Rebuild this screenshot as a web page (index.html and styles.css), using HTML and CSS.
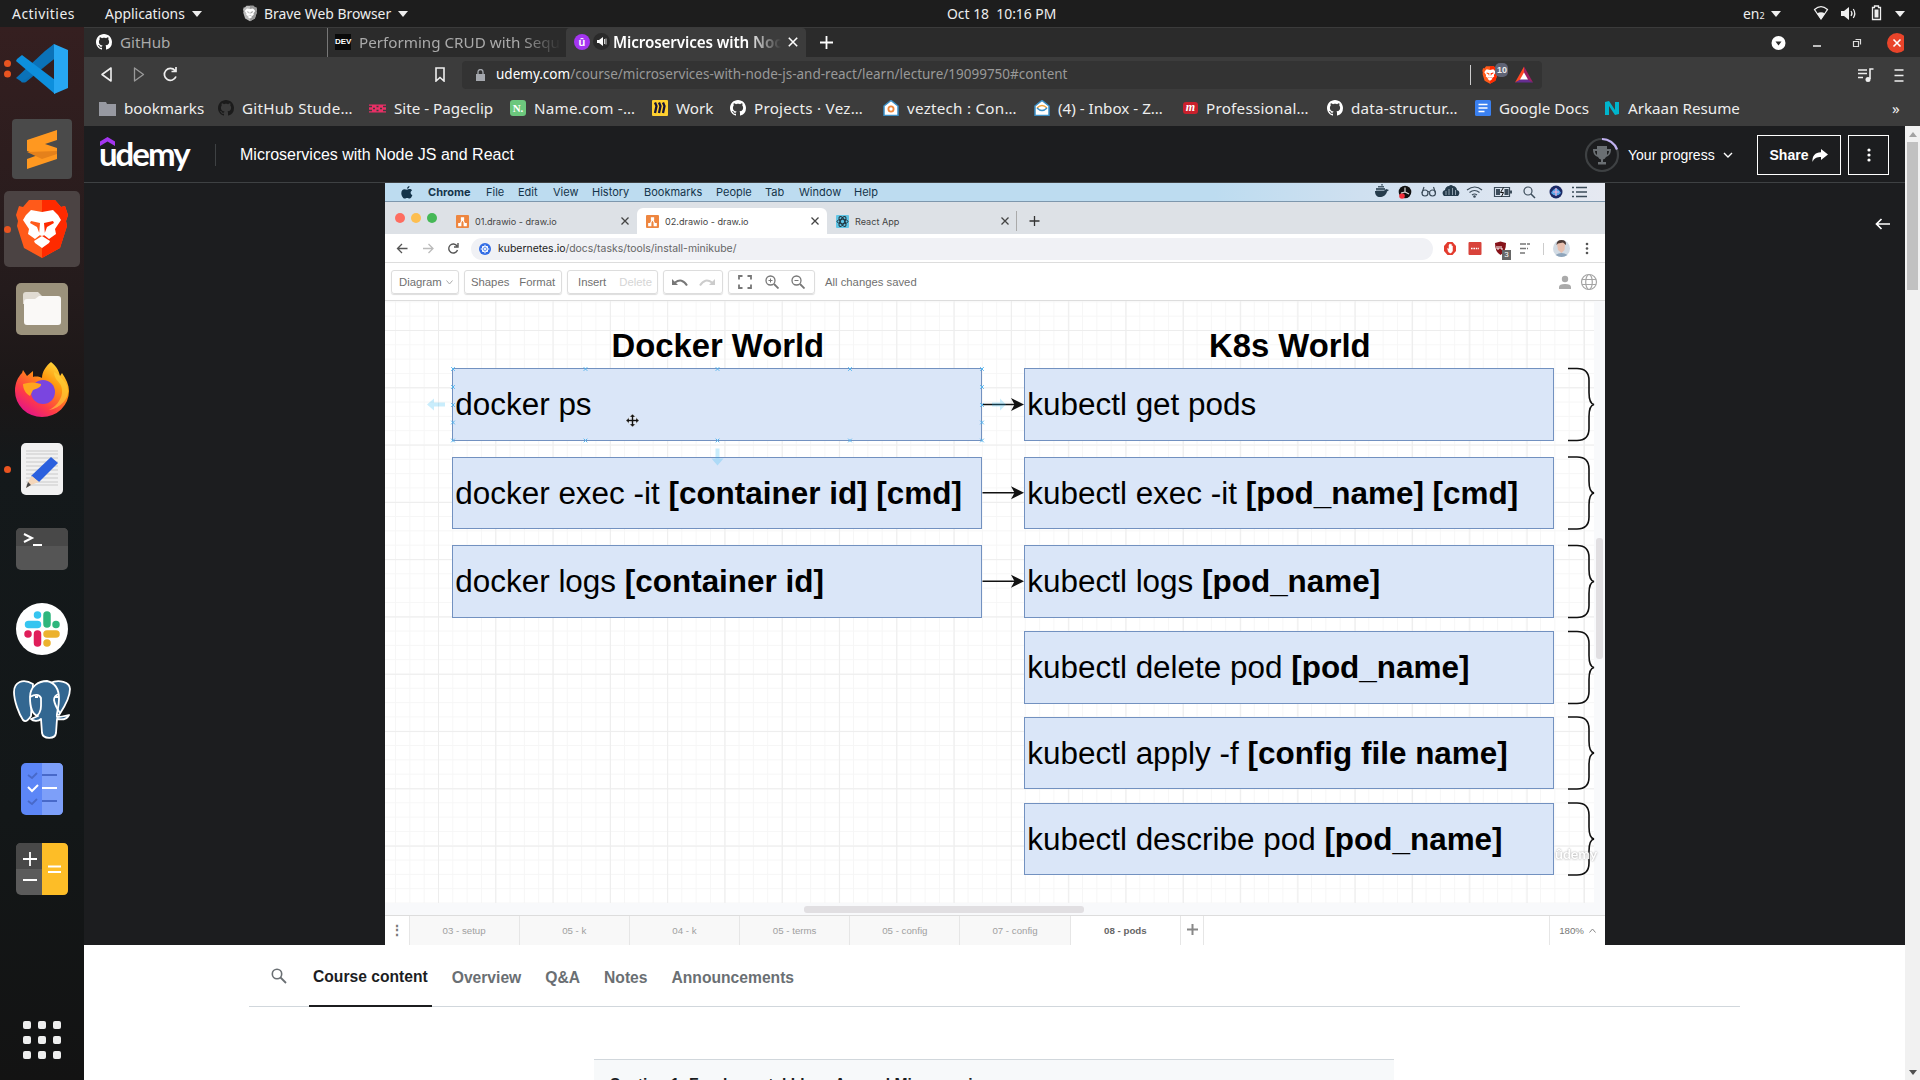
FILE: index.html
```html
<!DOCTYPE html>
<html lang="en">
<head>
<meta charset="utf-8">
<title>Microservices with Node JS and React</title>
<link rel="stylesheet" href="styles.css">
</head>
<body>
<svg class="defs" width="0" height="0">
  <defs>
    <symbol id="github" viewBox="0 0 16 16"><path fill="currentColor" d="M8 0C3.58 0 0 3.58 0 8c0 3.54 2.29 6.53 5.47 7.59.4.07.55-.17.55-.38 0-.19-.01-.82-.01-1.49-2.01.37-2.53-.49-2.69-.94-.09-.23-.48-.94-.82-1.13-.28-.15-.68-.52-.01-.53.63-.01 1.08.58 1.23.82.72 1.21 1.87.87 2.33.66.07-.52.28-.87.51-1.07-1.78-.2-3.64-.89-3.64-3.95 0-.87.31-1.59.82-2.15-.08-.2-.36-1.02.08-2.12 0 0 .67-.21 2.2.82.64-.18 1.32-.27 2-.27.68 0 1.36.09 2 .27 1.53-1.04 2.2-.82 2.2-.82.44 1.1.16 1.92.08 2.12.51.56.82 1.27.82 2.15 0 3.07-1.87 3.75-3.65 3.95.29.25.54.73.54 1.48 0 1.07-.01 1.93-.01 2.2 0 .21.15.46.55.38A8.01 8.01 0 0 0 16 8c0-4.42-3.58-8-8-8z"/></symbol>
    <symbol id="lion" viewBox="0 0 52 60"><path d="M13 1h26l6 7 4-1 3 9-2 6 1 5-7 22-18 10L8 49 1 27l1-5-2-6 3-9 4 1z" fill="var(--shield)"/><path d="M26 1h13l6 7 4-1 3 9-2 6 1 5-7 22-18 10z" fill="var(--shield2)"/><path d="M15 11l11 2 11-2 5 5 3 5-6 9 1 5-7 5-5-4 3-8 7-4-1-2-9 2 1 12-3 1-3-1 1-12-9-2-1 2 7 4 3 8-5 4-7-5 1-5-6-9 3-5zM26 37l8 5-1 2-7 5-7-5-1-2z" fill="#fff"/></symbol>
    <symbol id="drawio" viewBox="0 0 12 12"><rect width="12" height="12" rx="1" fill="#ee8640"/><path d="M6 4L3.5 9M6 4l2.5 5" stroke="#fff" stroke-width="1"/><path d="M4.5 2h3v3h-3zM2 7.3h3v3H2zM7 7.3h3v3H7z" fill="#fff"/></symbol>
    <symbol id="cross" viewBox="0 0 10 10"><path d="M1.5 1.5l7 7m0-7l-7 7" stroke="currentColor" stroke-width="1.3"/></symbol>
    <symbol id="mail" viewBox="0 0 16 16"><path d="M1 6l7-5.500 7 5.500v9.500H1z" fill="#fff" stroke="#3b8fc6" stroke-width="1.500"/></symbol>
    <symbol id="ndoc" viewBox="0 0 16 16"><path d="M1 15V2l4-1 6 9V2h4v12l-4 1-6-9v9z" fill="#00b5cc"/></symbol>
  </defs>
</svg>

<header class="topbar">
  <span class="act">Activities</span>
  <span class="menu"><b>Applications</b><i class="caret"></i></span>
  <span class="menu"><svg class="mono" width="14" height="19"><use href="#lion"/></svg><b>Brave Web Browser</b><i class="caret"></i></span>
  <span class="clock">Oct 18 &nbsp;10:16 PM</span>
  <span class="lang">en<small>2</small><i class="caret"></i></span>
  <svg class="tray" width="100" height="27" viewBox="0 0 100 27"><path d="M6.500 9.500c4-3.500 9-3.500 13 0L13 19z" fill="none" stroke="#eee" stroke-width="1.200"/><path d="M9 13.500c2.500-1.700 5.500-1.700 8 0L13 19.500z" fill="#eee"/><path d="M33 11h3l5-4v13l-5-4h-3z" fill="#eee"/><path d="M43 11q2 2.500 0 5M45.300 9q3 4.500 0 9" stroke="#eee" stroke-width="1.200" fill="none"/><path d="M64.500 7.500h2v-1.500h4v1.500h2v12h-8z" fill="none" stroke="#eee" stroke-width="1.300"/><path d="M66.500 9.500h4v8h-4z" fill="#eee"/><path d="M87 11h10l-5 6z" fill="#eee"/></svg>
</header>

<div class="desktop">
<aside class="dock">
  <div class="app two"><svg width="52" height="52" viewBox="0 0 52 52"><path d="M5 39L38 1v15L10 39q-2 1-5 0z" fill="#0a6fb3"/><path d="M0 35l29-27 9-7v15L6 39z" fill="#0b72b8"/><path d="M1 16l5-4L39 37v14L0 18z" fill="#0d8fdc"/><path d="M38 1l14 6v38l-14 6z" fill="#27a7f2"/></svg></div>
  <div class="app"><svg width="60" height="60" viewBox="0 0 60 60"><rect width="60" height="60" rx="4" fill="#4a4a4a"/><path d="M15 21l30-10v10l-12 4 12 4v11L15 50V40l11-4-11-4z" fill="#ff9820"/><path d="M15 33l30-1v3l-15 5z" fill="#e5811b"/></svg></div>
  <div class="app on current"><svg class="orange" width="52" height="60"><use href="#lion"/></svg></div>
  <div class="app"><svg width="52" height="52" viewBox="0 0 52 52"><rect width="52" height="52" rx="5" fill="#9b927c"/><path d="M7 12q0-3 3-3h12l4 4h15v8H7z" fill="#e0dbd2"/><path d="M8 19q0-3 3-3h8l4-3h19q3 0 3 3v23q0 3-3 3H11q-3 0-3-3z" fill="#faf9f7"/></svg></div>
  <div class="app"><svg width="54" height="55" viewBox="0 0 54 55"><defs><linearGradient id="fx" x1="1" y1="0" x2=".3" y2="1"><stop offset="0" stop-color="#fff44f"/><stop offset=".4" stop-color="#ff980e"/><stop offset=".75" stop-color="#ff3b47"/><stop offset="1" stop-color="#e31587"/></linearGradient></defs><path d="M36 0c6 5 8 9 9 14l2-3c4 6 7 12 7 18a27 26 0 0 1-54 0c0-8 3-14 7-18l1-3 4 6 6-5v6c3-1 8 0 9 1 0-6 4-12 9-16z" fill="url(#fx)"/><circle cx="28" cy="30" r="12" fill="#7a45e0"/><path d="M8 22q9-3 18 0c1 3-5 5-8 6l-3 6c-4-2-7-7-7-12z" fill="#ffa51e"/><path d="M39 10c0 10 9 9 8 21-1 8-7 14-13 17 12-2 20-12 19-20-1-8-6-10-8-14z" fill="#ffd53c" opacity=".6"/></svg></div>
  <div class="app on"><svg width="42" height="52" viewBox="0 0 42 52"><rect width="42" height="52" rx="5" fill="#f1f1f1"/><path d="M5 8h32M5 11h32M5 15h32M5 19h32M5 23h32M5 27h32M5 31h32M5 35h32M5 39h32M5 42h32" stroke="#c9c9c9" stroke-width="1"/><path d="M30 14l7 6-19 19-8-6z" fill="#2b60de"/><path d="M11 33l7 6-8 3-5 3 3-8z" fill="#f4d7bb"/><path d="M7 39l3 3-5 3z" fill="#444"/></svg></div>
  <div class="app"><svg width="52" height="42" viewBox="0 0 52 42"><rect width="52" height="42" rx="5" fill="#555"/><path d="M0 18V5q0-5 5-5h42q5 0 5 5v13z" fill="#484848"/><path d="M8 6l8 4-8 4M17 17h9" fill="none" stroke="#fff" stroke-width="2"/></svg></div>
  <div class="app"><svg width="52" height="52" viewBox="0 0 52 52"><circle cx="26" cy="26" r="26" fill="#fff"/><g stroke-width="7.500" stroke-linecap="round"><path d="M12.500 21.500h9M21.500 12v0" stroke="#36c5f0"/><path d="M31 12v9M40 21.500v0" stroke="#2eb67d"/><path d="M31 31h9M31 40v0" stroke="#ecb22e"/><path d="M21.500 31v9M12 31v0" stroke="#e01e5a"/></g></svg></div>
  <div class="app"><svg width="58" height="60" viewBox="0 0 58 60"><g fill="#336791" stroke="#fff" stroke-width="1.800" stroke-linejoin="round"><path d="M37 4c9-4 20-1 20 6 0 10-7 20-11 26l-6-3zM20 5C10-1 1 3 1 13c0 9 5 22 9 28 3 3 6-1 8-4z"/><path d="M17 18C17 7 26 2 34 2c9 2 12 10 12 18 0 9-3 15-2 18 4 0 8-1 12-2-2 4-7 5-12 4l-1 14c-1 7-13 6-14 0l-1-14c-3 3-8 2-10 0l7-3c-7-2-8-10-8-19z"/><path d="M17 18c5-3 9-3 11 1 0 8 1 13-4 18M46 15c-4 1-5 3-5 6 1 6 4 10 6 13" fill="none"/></g><path d="M22 18h3M42 18h3" stroke="#fff" stroke-width="2"/></svg></div>
  <div class="app"><svg width="42" height="52" viewBox="0 0 42 52"><rect width="42" height="52" rx="5" fill="#5c86f7"/><path d="M21 0h16q5 0 5 5v42q0 5-5 5H21z" fill="#7d9ff9"/><path d="M7 12l4 3 5-5M21 12h15M7 38l4 3 5-5M21 38h15" stroke="#4869c9" stroke-width="1.800" fill="none"/><path d="M7 24l4 4 6-6M21 25h15" stroke="#fff" stroke-width="2" fill="none"/></svg></div>
  <div class="app"><svg width="52" height="52" viewBox="0 0 52 52"><rect width="52" height="52" rx="5" fill="#5b5b5b"/><path d="M0 26V5q0-5 5-5h21v26z" fill="#484848"/><path d="M26 0h21q5 0 5 5v42q0 5-5 5H26z" fill="#fdbd27"/><path d="M7 16h14M14 9v14M7 37h14M32 23.500h13M32 29h13" stroke="#fff" stroke-width="1.800"/></svg></div>
  <div class="grid9"><i></i><i></i><i></i><i></i><i></i><i></i><i></i><i></i><i></i></div>
</aside>

<main class="browser">
  <div class="tabstrip">
    <div class="tab t1"><svg width="16" height="16"><use href="#github"/></svg><span>GitHub</span></div>
    <div class="tab t2"><em class="dev">DEV</em><span class="fade">Performing CRUD with Sequ</span></div>
    <div class="tab t3"><em class="ud">û</em><svg width="17" height="17" viewBox="0 0 17 17"><circle cx="8.500" cy="8.500" r="8.500" fill="#2a2a2a"/><path d="M4 7h2l4-3v9l-4-3H4z" fill="#fff"/><path d="M11.500 6v5M13 5.500v6" stroke="#fff" stroke-width=".8"/></svg><span class="fade">Microservices with Noc</span><svg class="x" width="12" height="12"><use href="#cross"/></svg></div>
    <svg class="plus" width="13" height="13" viewBox="0 0 13 13"><path d="M6.500 0v13M0 6.500h13" stroke="#fff" stroke-width="1.800"/></svg>
    <svg class="winbtns" width="134" height="28" viewBox="0 0 134 28"><circle cx="8.500" cy="14" r="7" fill="#fff"/><path d="M5.500 12.500h6l-3 4z" fill="#2b2b2b"/><path d="M43 17h8" stroke="#fff" stroke-width="1.400"/><path d="M83.500 12.500h5v5h-5zM85.500 10.500h5v5" fill="none" stroke="#ddd" stroke-width="1.200"/><circle cx="127" cy="14" r="10" fill="#e9442a"/><path d="M123.500 10.500l7 7m0-7l-7 7" stroke="#fff" stroke-width="1.600"/></svg>
  </div>

  <div class="navbar">
    <svg class="history" width="100" height="28" viewBox="0 0 100 28"><path d="M16 8v13L7 14.500z" fill="none" stroke="#eee" stroke-width="1.600" stroke-linejoin="round"/><path d="M39.500 8v13l9-6.500z" fill="none" stroke="#999" stroke-width="1.300" stroke-linejoin="round"/><path d="M80 10.500a6 6 0 1 0 1 6M81 7v4.500h-4.500" fill="none" stroke="#eee" stroke-width="1.700"/></svg>
    <svg class="mark" width="12" height="15" viewBox="0 0 12 15"><path d="M2 1h8v13l-4-3.500L2 14z" fill="none" stroke="#eee" stroke-width="1.600"/></svg>
    <div class="omni">
      <svg width="9" height="12" viewBox="0 0 9 12"><path d="M0 5h9v7H0z" fill="#a5a8ae"/><path d="M2 5V3a2.500 2.500 0 0 1 5 0v2" fill="none" stroke="#a5a8ae" stroke-width="1.300"/></svg>
      <span class="url"><b>udemy.com</b>/course/microservices-with-node-js-and-react/learn/lecture/19099750#content</span>
      <svg class="shields" width="45" height="24" viewBox="0 0 45 24"><path d="M.5 2v20" stroke="#ccc"/><svg class="orange" x="12" y="3" width="16" height="18" viewBox="0 0 52 60"><use href="#lion"/></svg><rect x="25" y="0" width="13" height="14" rx="5" fill="#5f6375"/></svg>
      <svg class="bat" width="18" height="17" viewBox="0 0 18 16"><path d="M9 0L0 16l9-4z" fill="#ff4724"/><path d="M9 0l9 16-9-4z" fill="#9e1f63"/><path d="M0 16h18l-9-5z" fill="#662d91"/><path d="M9 6l4 7H5z" fill="#fff"/></svg>
      <small class="count">10</small>
    </div>
    <svg class="tools" width="60" height="28" viewBox="0 0 60 28"><path d="M4 9h9M4 12.500h9M4 16.500h5" stroke="#eee" stroke-width="1.700"/><path d="M19.500 8h-3.500v10" stroke="#eee" stroke-width="1.600" fill="none"/><circle cx="14" cy="18.500" r="2.500" fill="#eee"/><path d="M40.500 9h9M40.500 14.500h9M40.500 20h9" stroke="#eee" stroke-width="1.700"/></svg>
  </div>

  <div class="bookmarks">
    <a><svg width="17" height="15" viewBox="0 0 17 15"><path d="M0 1h7l1 2h9v12H0z" fill="#9799a1"/></svg><span>bookmarks</span></a>
    <a><svg class="dark" width="16" height="16"><use href="#github"/></svg><span class="wide">GitHub Stude…</span></a>
    <a><svg width="17" height="9" viewBox="0 0 17 9"><rect y=".5" width="17" height="8" fill="#e92f66"/><path d="M0 2.500h3M0 6.500h3M14 2.500h3M14 6.500h3M4 4.500h2M11 4.500h2M7.500 2.500h2M7.500 6.500h2" stroke="#3c3c3c" stroke-width="1.300"/></svg><span>Site - Pageclip</span></a>
    <a><em class="nm">N.</em><span class="wide">Name.com -…</span></a>
    <a><svg width="16" height="16" viewBox="0 0 16 16"><rect width="16" height="16" rx="1" fill="#ffd02f"/><path d="M3 2.500L4.500 6 3 13M7 2.500L8.500 6 7 13M11 2.500L12.500 6 11 13" stroke="#15123a" stroke-width="2.300" fill="none"/></svg><span>Work</span></a>
    <a><svg width="16" height="16"><use href="#github"/></svg><span class="wide">Projects · Vez…</span></a>
    <a><svg width="16" height="16" viewBox="0 0 16 16"><use href="#mail"/><circle cx="8" cy="9" r="2.600" fill="none" stroke="#f0883c" stroke-width="1.800"/></svg><span class="wide">veztech : Con…</span></a>
    <a><svg width="16" height="16" viewBox="0 0 16 16"><use href="#mail"/><path d="M3 8q5-5 10 0" fill="none" stroke="#f0a33c" stroke-width="1.500"/><path d="M3 8q5 5 10 0" fill="none" stroke="#3b8fc6" stroke-width="1.500"/></svg><span>(4) - Inbox - Z…</span></a>
    <a><em class="mm">m</em><span class="wide">Professional…</span></a>
    <a><svg width="16" height="16"><use href="#github"/></svg><span class="wide">data-structur…</span></a>
    <a><svg width="16" height="16" viewBox="0 0 16 16"><rect width="16" height="16" rx="1.500" fill="#3a80f0"/><path d="M3.500 4.500h9M3.500 8h9M3.500 11.500h6" stroke="#fff" stroke-width="1.600"/></svg><span>Google Docs</span></a>
    <a><svg width="16" height="16"><use href="#ndoc"/></svg><span>Arkaan Resume</span></a>
    <a class="more">»</a>
  </div>

  <div class="page">
  <div class="content">
    <div class="course">
      <div class="logo"><svg width="15" height="9" viewBox="0 0 15 9"><path d="M7.500 0L15 4.500v4.500L7.500 4.500 0 9V4.500z" fill="#a435f0"/></svg>udemy</div>
      <div class="title">Microservices with Node JS and React</div>
      <svg class="ring" width="36" height="36" viewBox="0 0 36 36"><circle cx="18" cy="18" r="16" fill="none" stroke="#3e4143" stroke-width="2.200"/><path d="M18 2a16 16 0 0 1 15 10.500" fill="none" stroke="#c0b0f0" stroke-width="2.200"/><path d="M13 9h10v3h4c0 5-2 7-5 8q-1 2-3 2.500V25h3v2.500h-8V25h3v-2.500q-2-.5-3-2.500c-3-1-5-3-5-8h4zm-2 5c0 2 1 3 2 4v-4zm12 0v4c1-1 2-2 2-4z" fill="#6a6f73"/></svg>
      <span class="yp">Your progress</span>
      <svg class="chev" width="10" height="7" viewBox="0 0 10 7"><path d="M1 1l4 4 4-4" fill="none" stroke="#fff" stroke-width="1.400"/></svg>
      <div class="btn share">Share<svg width="16" height="13" viewBox="0 0 16 13"><path d="M9 0l7 5.500L9 11V8C5 8 2 9 .5 13 0 7 3 3.500 9 3.300z" fill="#fff"/></svg></div>
      <div class="btn dots"><svg width="4" height="14" viewBox="0 0 4 14"><circle cx="2" cy="2" r="1.600" fill="#fff"/><circle cx="2" cy="7" r="1.600" fill="#fff"/><circle cx="2" cy="12" r="1.600" fill="#fff"/></svg></div>
    </div>

    <div class="stage">
      <div class="video">
        <div class="macbar">
          <svg width="12" height="13" viewBox="0 0 12 13"><path d="M8.500 0c0 1.500-1 2.700-2.500 2.800C6 1.300 7 .3 8.500 0zM6 3.700c1 0 1.300-.6 2.600-.6 1 0 2 .5 2.400 1.300-2 1-1.700 3.800.4 4.700-.6 1.700-1.600 3.500-2.900 3.500-1 0-1.200-.5-2.300-.5s-1.500.5-2.300.5C2 12.600.3 9.600.3 7.200c0-2.500 1.500-4 3.200-4 1 0 1.800.5 2.500.5z" fill="#14344a"/></svg>
          <b>Chrome</b><span>File</span><span>Edit</span><span>View</span><span>History</span><span>Bookmarks</span><span>People</span><span>Tab</span><span>Window</span><span>Help</span>
          <svg class="macicons" width="214" height="18" viewBox="0 0 214 18"><g fill="#263c4c"><path d="M0 8h9l2-2 3 1-2 1.500c-1 4-4 5.500-7 5.500S0 12 0 8z"/><path d="M1 5h9v2.500H1zM3 3h6v1.500H3zM6 1.300h2v1.300H6z" opacity=".8"/><path d="M69 13c-2-2-2-5 1-6 0-2 2-4 4-4 1-1.500 3-1.500 4 0 2 0 4 2 4 4 3 1 3 4 1 6z"/><path d="M71 12V8M74 12V6M77.500 12V5M80.500 12V7" stroke="#d7e3ee" stroke-width=".6"/></g><circle cx="30" cy="9" r="6.300" fill="#111"/><circle cx="27" cy="13" r="2.800" fill="#f2303b"/><path d="M30 9V4.500M30 9l4 2M30 9l-4 1" stroke="#ddd" stroke-width="1.200"/><g fill="none" stroke="#3c4c5a" stroke-width="1.200"><circle cx="50" cy="10" r="3"/><circle cx="57.500" cy="10" r="3"/><path d="M47 10l2-6M60.500 10l-2-6M53 9q.7-1 1.500 0M92 7q8-6 15 0M94.500 9.500q5-4 10 0M97 12q2.500-2 5 0"/><path d="M119.500 4.500h15v9h-15z"/><circle cx="153" cy="8" r="4"/><path d="M156 11l4 4M197 4.500h2M201 4.500h11M197 9h2M201 9h11M197 13.500h2M201 13.500h11" stroke-width="1.500"/></g><circle cx="99.500" cy="13.500" r="1.300" fill="#3c4c5a"/><path d="M121 6h4v6h-4zM129.500 6h4v6h-4zM135 7.500h2v3h-2z" fill="#3c4c5a"/><path d="M128.500 4.500l-3 5h3l-2 4" stroke="#111" fill="none"/><circle cx="181" cy="9" r="6.500" fill="#1c2a66"/><path d="M176 10q5-9 10 0-5 5-10 0z" fill="#55a5e8"/><path d="M181 5v8M178 9h6" stroke="#f0b0d8" stroke-width="1.200"/></svg>
        </div>
        <div class="ctabs">
          <div class="lights"><i></i><i></i><i></i></div>
          <div class="ctab"><svg width="13" height="13"><use href="#drawio"/></svg><span>01.drawio - draw.io</span><svg class="x" width="10" height="10"><use href="#cross"/></svg></div>
          <div class="ctab active"><svg width="13" height="13"><use href="#drawio"/></svg><span>02.drawio - draw.io</span><svg class="x" width="10" height="10"><use href="#cross"/></svg></div>
          <div class="ctab"><svg width="13" height="13" viewBox="0 0 13 13"><rect width="13" height="13" rx="1" fill="#61c5e5"/><g fill="none" stroke="#20323c" stroke-width="1"><ellipse cx="6.500" cy="6.500" rx="5.500" ry="2.200"/><ellipse cx="6.500" cy="6.500" rx="5.500" ry="2.200" transform="rotate(60 6.500 6.500)"/><ellipse cx="6.500" cy="6.500" rx="5.500" ry="2.200" transform="rotate(120 6.500 6.500)"/></g></svg><span>React App</span><svg class="x" width="10" height="10"><use href="#cross"/></svg></div>
          <svg class="newtab" width="24" height="20" viewBox="0 0 24 20"><path d="M.5 0v20" stroke="#aaa"/><path d="M18.500 5v10M13.500 10h10" stroke="#333" stroke-width="1.300"/></svg>
        </div>
        <div class="cnav">
          <svg width="80" height="28" viewBox="0 0 80 28"><path d="M22.500 14.500H12.500M17 10l-4.500 4.500L17 19" fill="none" stroke="#555" stroke-width="1.300"/><path d="M38 14.500h10M43.500 10l4.500 4.500-4.500 4.500" fill="none" stroke="#bbb" stroke-width="1.300"/><path d="M72 12a4.500 4.500 0 1 0 .5 4M73 9v4h-4" fill="none" stroke="#555" stroke-width="1.400"/></svg>
          <div class="comni"><svg width="12" height="12" viewBox="0 0 12 12"><circle cx="6" cy="6" r="6" fill="#326ce5"/><circle cx="6" cy="6" r="3" fill="none" stroke="#fff"/><path d="M6 1.500v9M1.500 6h9M3 3l6 6M9 3L3 9" stroke="#fff" stroke-width=".7"/></svg><span><b>kubernetes.io</b>/docs/tasks/tools/install-minikube/</span></div>
          <svg class="exts" width="164" height="28" viewBox="0 0 164 28"><path d="M7.500 8h5l3.500 4v5l-3.500 4h-5L4 17v-5z" fill="#e33b2e"/><path d="M7.500 14.500l1 3.500 1.500 1h1l1.500-2v-5h-1v-1.500h-1V10h-1v1H9v4z" fill="#fff" stroke="#fff" stroke-width=".5"/><rect x="28.500" y="8" width="13" height="13" rx="1" fill="#d8433b"/><path d="M31 14.500h8" stroke="#fff" stroke-width="1.600" stroke-dasharray="1.600 .8"/><path d="M55 9l5.500-1.500L66 9q0 9-5.500 12Q55 18 55 9z" fill="#861219"/><path d="M57 12v3h2v-3M61 12v3h2" stroke="#fff" fill="none"/><path d="M80 10h10M80 14.500h8M80 19h5" stroke="#777" stroke-width="1.500" stroke-dasharray="6 1"/><path d="M103.500 9v12" stroke="#ccc"/><circle cx="121.500" cy="14.500" r="8.500" fill="#d2dbe4"/><path d="M117 10q4-6 8 0l-.5 6-3 3-3.500-3z" fill="#e8bfae"/><path d="M116.500 11q0-5 5-5t4.500 5l-3-2.500-5 1z" fill="#4d3a35"/><path d="M115.500 21q6-4 12 0-6 4-12 0z" fill="#8fa5bb"/><g fill="#555"><circle cx="147" cy="10" r="1.300"/><circle cx="147" cy="14.500" r="1.300"/><circle cx="147" cy="19" r="1.300"/></g></svg>
          <small class="cnt">3</small>
        </div>
        <div class="dbar">
          <div class="grp g1"><span>Diagram</span><svg width="7" height="5" viewBox="0 0 7 5"><path d="M.5.5l3 3.500 3-3.500" fill="none" stroke="#aaa"/></svg></div>
          <div class="grp g2"><span>Shapes</span><span>Format</span></div>
          <div class="grp g3"><span>Insert</span><span class="off">Delete</span></div>
          <div class="grp g4"><svg width="17" height="10" viewBox="0 0 17 10"><path d="M1 2v6h6z" fill="#777"/><path d="M4 5.500Q11 .5 16 8.500" fill="none" stroke="#777" stroke-width="2"/></svg><svg width="17" height="10" viewBox="0 0 17 10"><path d="M16 2v6h-6z" fill="#ccc"/><path d="M13 5.500Q6 .5 1 8.500" fill="none" stroke="#ccc" stroke-width="2"/></svg></div>
          <div class="grp g5"><svg width="14" height="14" viewBox="0 0 14 14"><path d="M1 4.500V1h3.500M9.500 1H13v3.500M13 9.500V13H9.500M4.500 13H1V9.500" fill="none" stroke="#777" stroke-width="1.800"/></svg><svg width="14" height="14" viewBox="0 0 14 14"><circle cx="5.500" cy="5.500" r="4.500" fill="none" stroke="#777" stroke-width="1.300"/><path d="M9 9l4.500 4.500" stroke="#777" stroke-width="1.800"/><path d="M3.500 5.500h4M5.500 3.500v4" stroke="#777"/></svg><svg width="14" height="14" viewBox="0 0 14 14"><circle cx="5.500" cy="5.500" r="4.500" fill="none" stroke="#777" stroke-width="1.300"/><path d="M9 9l4.500 4.500" stroke="#777" stroke-width="1.800"/><path d="M3.500 5.500h4" stroke="#777"/></svg></div>
          <span class="saved">All changes saved</span>
          <svg class="who" width="42" height="20" viewBox="0 0 42 20"><circle cx="8" cy="7" r="3.200" fill="#aaa"/><path d="M2 17v-2q0-3 6-3t6 3v2z" fill="#aaa"/><g fill="none" stroke="#a5a5a5" stroke-width="1.200"><circle cx="32" cy="10" r="7.500"/><ellipse cx="32" cy="10" rx="3.300" ry="7.500"/><path d="M25 7.500h14M25 12.500h14"/></g></svg>
        </div>
        <div class="canvas">
          <div class="paper"></div>
          <h2 class="h1">Docker World</h2><h2 class="h2">K8s World</h2>
          <div class="node l r1">docker ps</div>
          <div class="node l r2"><p>docker exec -it <b>[container id] [cmd]</b></p></div>
          <div class="node l r3"><p>docker logs <b>[container id]</b></p></div>
          <div class="node k r1">kubectl get pods</div>
          <div class="node k r2"><p>kubectl exec -it <b>[pod_name] [cmd]</b></p></div>
          <div class="node k r3"><p>kubectl logs <b>[pod_name]</b></p></div>
          <div class="node k r4"><p>kubectl delete pod <b>[pod_name]</b></p></div>
          <div class="node k r5"><p>kubectl apply -f <b>[config file name]</b></p></div>
          <div class="node k r6"><p>kubectl describe pod <b>[pod_name]</b></p></div>
          <svg class="wires" width="1220" height="614" viewBox="0 0 1220 614">
            <defs>
              <g id="wire"><path d="M597.500 0h33" stroke="#111" stroke-width="1.500"/><path d="M639 0l-13-6.500 3.500 6.500-3.500 6.500z" fill="#111"/></g>
              <path id="brace" d="M1183 0h9q12 0 12 12v12q0 11 5 12-5 1-5 12v12q0 12-12 12h-9" fill="none" stroke="#111" stroke-width="1.600"/>
              <path id="pt" d="M-1.800-1.800l3.600 3.600m0-3.600l-3.600 3.600" stroke="#55b4ee" stroke-width="1"/>
            </defs>
            <use href="#wire" y="103.500"/><use href="#wire" y="191.800"/><use href="#wire" y="280.300"/>
            <use href="#brace" y="67.500"/><use href="#brace" y="156"/><use href="#brace" y="244.500"/><use href="#brace" y="330.500"/><use href="#brace" y="416"/><use href="#brace" y="502"/>
            <use href="#pt" x="68" y="68"/><use href="#pt" x="200.500" y="68"/><use href="#pt" x="332.500" y="68"/><use href="#pt" x="465" y="68"/><use href="#pt" x="597" y="68"/>
            <use href="#pt" x="68" y="139.500"/><use href="#pt" x="200.500" y="139.500"/><use href="#pt" x="332.500" y="139.500"/><use href="#pt" x="465" y="139.500"/><use href="#pt" x="597" y="139.500"/>
            <use href="#pt" x="68" y="86"/><use href="#pt" x="68" y="104"/><use href="#pt" x="68" y="121.500"/><use href="#pt" x="597" y="86"/><use href="#pt" x="597" y="104"/><use href="#pt" x="597" y="121.500"/>
            <g fill="#29b6f2" opacity=".25"><path d="M42 103.500l7-6v4h11v4H49v4z"/><path d="M621 103.500l-6-6v4h-8v4h8v4z"/><path d="M332.500 164.500l-6-7h4v-10h4v10h4z"/></g>
            <path d="M247.500 113l3 3h-2v2.500h2.500v-2l3 3-3 3v-2h-2.500v2.500h2l-3 3-3-3h2v-2.500H244v2l-3-3 3-3v2h2.500V116h-2z" fill="#111" stroke="#fff" stroke-width=".5"/>
          </svg>
          <div class="vthumb"></div><div class="hthumb"></div>
          <div class="wm">ûdemy</div>
        </div>
        <div class="sheets"><i class="d3">⋮</i><span>03 - setup</span><span>05 - k</span><span>04 - k</span><span>05 - terms</span><span>05 - config</span><span>07 - config</span><b>08 - pods</b><i class="add"><svg width="11" height="11" viewBox="0 0 11 11"><path d="M5.500 0v11M0 5.500h11" stroke="#888" stroke-width="2"/></svg></i><i></i><em>180%<svg width="7" height="5" viewBox="0 0 7 5"><path d="M.5 4.500l3-3.500 3 3.500" fill="none" stroke="#888"/></svg></em></div>
      </div>
      <svg class="back" width="16" height="12" viewBox="0 0 16 12"><path d="M15 6H1.500M6.500 1l-5 5 5 5" fill="none" stroke="#fff" stroke-width="1.700"/></svg>
    </div>

    <nav class="ctabsrow">
      <svg width="16" height="16" viewBox="0 0 16 16"><circle cx="6" cy="6" r="4.700" fill="none" stroke="#6a6f73" stroke-width="1.600"/><path d="M9.500 9.500L15 15" stroke="#6a6f73" stroke-width="1.800"/></svg>
      <a class="sel">Course content</a><a>Overview</a><a>Q&amp;A</a><a>Notes</a><a>Announcements</a>
    </nav>
    <div class="section">Section 1: Fundamental Ideas Around Microservices</div>
  </div>
  <div class="scroll"><i class="up"></i><b></b><i class="down"></i></div>
  </div>
</main>
</div>
</body>
</html>
```
FILE: styles.css
```css
* { box-sizing: border-box; }
body { margin: 0; width: 1920px; height: 1080px; overflow: hidden; background: #1d1d1d; color: #eee; font-family: "Noto Sans", sans-serif; }
svg { display: block; flex: none; }
.defs { position: absolute; }
i, em { font-style: normal; }
p, h2 { margin: 0; }

/* GNOME top bar */
.topbar { height: 27px; display: grid; grid-template-columns: 93px 138px 704px 796px 65px 1fr; align-items: center; padding-left: 12px; background: #1d1d1d; font-size: 13.900px; white-space: nowrap; }
.topbar b { font-weight: 400; }
.act { letter-spacing: .5px; }
.menu, .lang { display: flex; align-items: center; gap: 7px; }
.lang { gap: 0; }
.lang small { font-size: 9px; padding-top: 4px; }
.lang .caret { margin-left: 6px; }
.caret { border: 5px solid transparent; border-top: 6px solid #eee; border-bottom: 0; }
.mono { --shield: #bbb; --shield2: #999; }
.orange { --shield: #ff5a1a; --shield2: #ff2a00; }

.desktop { display: flex; height: 1053px; }

/* dock */
.dock { width: 84px; padding-top: 4px; background: linear-gradient(#351f20, #241b1c 25%, #1b1717 35%, #14191b 42%, #131718 75%, #131313); }
.app { position: relative; height: 76px; margin: 0 4px 4px; display: flex; align-items: center; justify-content: center; border-radius: 5px; }
.app.current { background: #4b4343; }
.app.on::before, .app.two::before { content: ""; position: absolute; left: 0; top: 35px; width: 7px; height: 7px; border-radius: 50%; background: #e95420; }
.app.two::before { top: 29px; box-shadow: 0 10.500px #e95420; }
.grid9 { display: grid; grid-template-columns: repeat(3, 8px); gap: 7px; width: 38px; margin: 114px auto 0; }
.grid9 i { height: 8px; border-radius: 2px; background: #eee; }

/* browser chrome */
.browser { flex: 1; border-top: 1px solid #3b3b3b; background: #3c3c3c; }
.tabstrip { display: flex; align-items: center; height: 29px; background: #2b2b2b; font-size: 15.200px; color: #aaa; white-space: nowrap; }
.tab { display: flex; align-items: center; height: 29px; padding-bottom: 2px; }
.tab svg { color: #fff; }
.t1 { width: 244px; padding-left: 12px; gap: 8px; border-right: 1px solid #777; }
.t2 { width: 238px; padding-left: 7px; gap: 8px; }
.t3 { width: 240px; padding-left: 8px; gap: 3px; background: #3c3c3c; border-radius: 4px 4px 0 0; color: #fff; font-weight: 600; }
.fade { width: 202px; -webkit-mask-image: linear-gradient(90deg, #000 80%, transparent); mask-image: linear-gradient(90deg, #000 80%, transparent); }
.t3 .fade { width: 168px; letter-spacing: -.1px; }
.t3 .x { margin-left: 3px; }
.dev { width: 16px; height: 16px; background: #0a0a0a; color: #fff; font: bold 8px/16px "Liberation Sans", sans-serif; text-align: center; }
.ud { width: 16px; height: 16px; border-radius: 50%; background: #a435f0; color: #fff; font: bold 12px/15px Lato, sans-serif; text-align: center; }
.plus { margin-left: 14px; }
.winbtns { margin-left: auto; margin-right: 16px; }
.navbar { display: flex; align-items: center; height: 35px; }
.history { margin: -1px 0 0 11px; }
.history + .mark { margin-left: 239px; }
.omni { position: relative; width: 1080px; height: 28px; margin-left: 16px; padding-left: 14px; display: flex; align-items: center; gap: 11px; background: #333; border-radius: 4px; font-size: 13.500px; color: #999; }
.omni b { color: #fff; font-weight: 400; }
.url { padding: 0 0 1px; white-space: nowrap; }
.shields { margin-left: auto; }
.bat { margin: 0 9px 0 -11px; }
.count { position: absolute; right: 35px; top: 3px; font: bold 9px/12px "Liberation Sans", sans-serif; color: #eee; }
.tools { margin-left: 312px; }
.bookmarks { display: grid; grid-template-columns: 119px 151px 141px 142px 78px 153px 151px 149px 144px 148px 129px 288px 20px; align-items: center; height: 34px; padding: 0 0 2px 15px; font-size: 15.200px; color: #eee; white-space: nowrap; }
.bookmarks a { display: flex; align-items: center; gap: 8px; }
.bookmarks svg { color: #fff; }
.bookmarks .dark { color: #1b1b1b; }
.wide { letter-spacing: .25px; }
.nm { width: 16px; height: 16px; border-radius: 3px; background: #6cc77d; color: #fff; font: bold 11px/16px "Liberation Serif", serif; text-align: center; }
.mm { width: 15px; height: 12px; border-radius: 3px; background: #c9202c; color: #fff; font: italic bold 12px/10px "Liberation Serif", serif; text-align: center; }

/* course page */
.page { display: flex; height: 954px; background: #fff; font-family: "Liberation Sans", Arial, sans-serif; }
.content { width: 1821px; }
.course { display: grid; grid-template-columns: 116px 1369px 44px 95px 34px 91px 42px; align-items: center; height: 57px; padding: 2px 0 0 15px; background: #1c1d1f; border-bottom: 1px solid #3e4143; color: #fff; font-size: 16px; }
.logo { position: relative; font: bold 33px/34px Lato, sans-serif; letter-spacing: -2px; margin-top: -4px; }
.logo svg { position: absolute; left: 1px; top: 1px; }
.title { height: 22px; line-height: 22px; border-left: 1px solid #3e4143; padding-left: 24px; }
.yp { font-size: 14px; }
.btn { height: 40px; border: 1px solid #fff; display: flex; align-items: center; justify-content: center; gap: 4px; font: bold 14px "Liberation Sans", sans-serif; }
.share { width: 84px; }
.dots { width: 41px; }
.stage { display: flex; height: 762px; padding-left: 301px; background: #1c1d1f; }
.back { margin: 35px 0 0 270px; }

/* recorded screen */
.video { width: 1220px; height: 762px; background: #fff; overflow: hidden; }
.macbar { display: grid; grid-template-columns: 27px 58px 32px 35px 39px 52px 72px 49px 34px 55px 521px 214px; align-items: center; height: 19px; padding-left: 16px; background: linear-gradient(90deg, #bddcf0 68%, #cfe0f0 80%, #e6e9f1); border-bottom: 1.500px solid #7d97ad; font: 11px/17px Inter, sans-serif; color: #14344a; }
.ctabs { display: flex; height: 32px; background: #dde1e6; font: 9.100px Inter, sans-serif; color: #444; }
.lights { display: flex; gap: 6px; width: 62px; padding: 11px 0 0 10px; }
.lights i { width: 10px; height: 10px; border-radius: 50%; background: #fe6d60; }
.lights i:nth-child(2) { background: #fdbe50; }
.lights i:nth-child(3) { background: #45b856; }
.ctab { display: flex; align-items: center; gap: 6px; width: 190px; height: 26px; margin-top: 6px; padding: 0 7px 0 9px; }
.ctab.active { background: #fff; border-radius: 6px 6px 0 0; }
.ctab .x { margin-left: auto; }
.newtab { margin: 9px 0 0 -1px; }
.cnav { position: relative; display: flex; align-items: center; height: 29px; border-bottom: 1px solid #ddd; font: 10.450px Inter, sans-serif; color: #666; }
.comni { display: flex; align-items: center; gap: 7px; width: 962px; height: 22px; margin: 1px 0 0 6px; padding-left: 8px; border-radius: 11px; background: #f0f1f5; }
.comni b { font-weight: 400; color: #222; }
.exts { margin-left: 7px; }
.cnt { position: absolute; left: 1117px; top: 16px; width: 9px; height: 10px; background: #666; color: #fff; font: 8px/10px "Liberation Sans", sans-serif; text-align: center; }
.dbar { display: flex; align-items: center; height: 38px; padding: 1px 0 0 6px; border-bottom: 1.500px solid #ddd; font-size: 11.300px; color: #707070; }
.grp { display: flex; align-items: center; height: 24px; margin-right: 5px; border: 1px solid #ddd; border-radius: 3px; box-shadow: 0 1px 1px #ddd; }
.g1 { width: 68px; padding-left: 7px; gap: 4px; }
.g2 { width: 98px; padding-left: 6px; gap: 10px; }
.g3 { width: 91px; padding-left: 10px; gap: 13px; }
.g4 { width: 60px; padding-left: 7px; gap: 11px; }
.g5 { width: 87px; padding-left: 9px; gap: 12.500px; }
.off { color: #d5d5d5; }
.saved { margin-left: 5px; white-space: nowrap; }
.who { margin: 0 6px 0 auto; }
.canvas { position: relative; height: 614px; background: #f8f9fb; color: #000; }
.paper { width: 1209px; height: 602px; background-color: #fff; background-image: linear-gradient(90deg, #ededed 1px, transparent 1px), linear-gradient(#ededed 1px, transparent 1px), linear-gradient(90deg, #f6f6f6 1px, transparent 1px), linear-gradient(#f6f6f6 1px, transparent 1px); background-size: 57.300px 57.300px, 57.300px 57.300px, 14.325px 14.325px, 14.325px 14.325px; background-position: 53px 29px; }
.canvas h2 { position: absolute; top: 26px; font: bold 32.800px/38px "Liberation Sans", sans-serif; white-space: nowrap; }
.h1 { left: 226.500px; }
.h2 { left: 824px; }
.node { position: absolute; width: 530px; height: 72.500px; padding: 1.500px 0 0 2.300px; display: flex; align-items: center; border: 1.500px solid #7291c0; background: #dae6f8; font-size: 31.450px; white-space: nowrap; }
.l { left: 67px; }
.k { left: 639px; }
.r1 { top: 67px; }
.r2 { top: 155.500px; }
.r3 { top: 244px; }
.r4 { top: 330px; }
.r5 { top: 415.500px; }
.r6 { top: 501.500px; }
.wires { position: absolute; left: 0; top: 0; }
.vthumb, .hthumb { position: absolute; background: #e1dfe2; border-radius: 3px; }
.vthumb { left: 1211px; top: 237px; width: 7px; height: 121px; }
.hthumb { left: 419px; top: 605px; width: 280px; height: 7px; }
.wm { position: absolute; left: 1170px; top: 544px; font: bold 14px/18px Lato, sans-serif; color: #fff; opacity: .9; text-shadow: 0 0 2px #888; }
.sheets { display: grid; grid-template-columns: 24.500px repeat(6, 110.200px) 110.500px 23px 346px 1fr; height: 30px; border-top: 1px solid #ddd; font-size: 9.700px; line-height: 29px; text-align: center; color: #a0a0a0; }
.sheets > * { border-right: 1px solid #e6e6e6; }
.sheets span { background: #f8f8f8; }
.sheets b { color: #666; }
.sheets .d3 { font-size: 14px; font-weight: bold; line-height: 28px; color: #777; }
.add svg { margin: 8px auto; }
.sheets em { display: flex; align-items: center; justify-content: center; gap: 5px; border: 0; color: #777; }

/* course tabs */
.ctabsrow { display: flex; align-items: center; width: 1491px; height: 62px; margin-left: 165px; padding-left: 22px; border-bottom: 1px solid #d1d7dc; font-weight: bold; font-size: 15.650px; color: #6a6f73; }
.ctabsrow a { margin-left: 24px; padding-top: 4px; }
.ctabsrow .sel { display: flex; align-items: center; height: 62px; margin: 1px -4px 0 22px; padding: 4px 4px 0; border-bottom: 2px solid #1c1d1f; color: #1c1d1f; }
.section { width: 800px; height: 40px; margin: 52px 0 0 510px; padding: 15px 16px 0; border-top: 1px solid #d1d7dc; background: #f7f9fa; color: #1c1d1f; font: bold 15.650px/20px "Liberation Sans", sans-serif; }
.scroll { width: 15px; display: flex; flex-direction: column; align-items: center; background: #f1f1f1; }
.scroll b { width: 11px; height: 148px; background: #c1c1c1; }
.up { border: 4px solid transparent; border-bottom: 5px solid #a3a3a3; border-top: 0; margin: 6px 0 5px; }
.down { border: 4px solid transparent; border-top: 5px solid #505050; border-bottom: 0; margin-top: auto; margin-bottom: 5px; }
```
